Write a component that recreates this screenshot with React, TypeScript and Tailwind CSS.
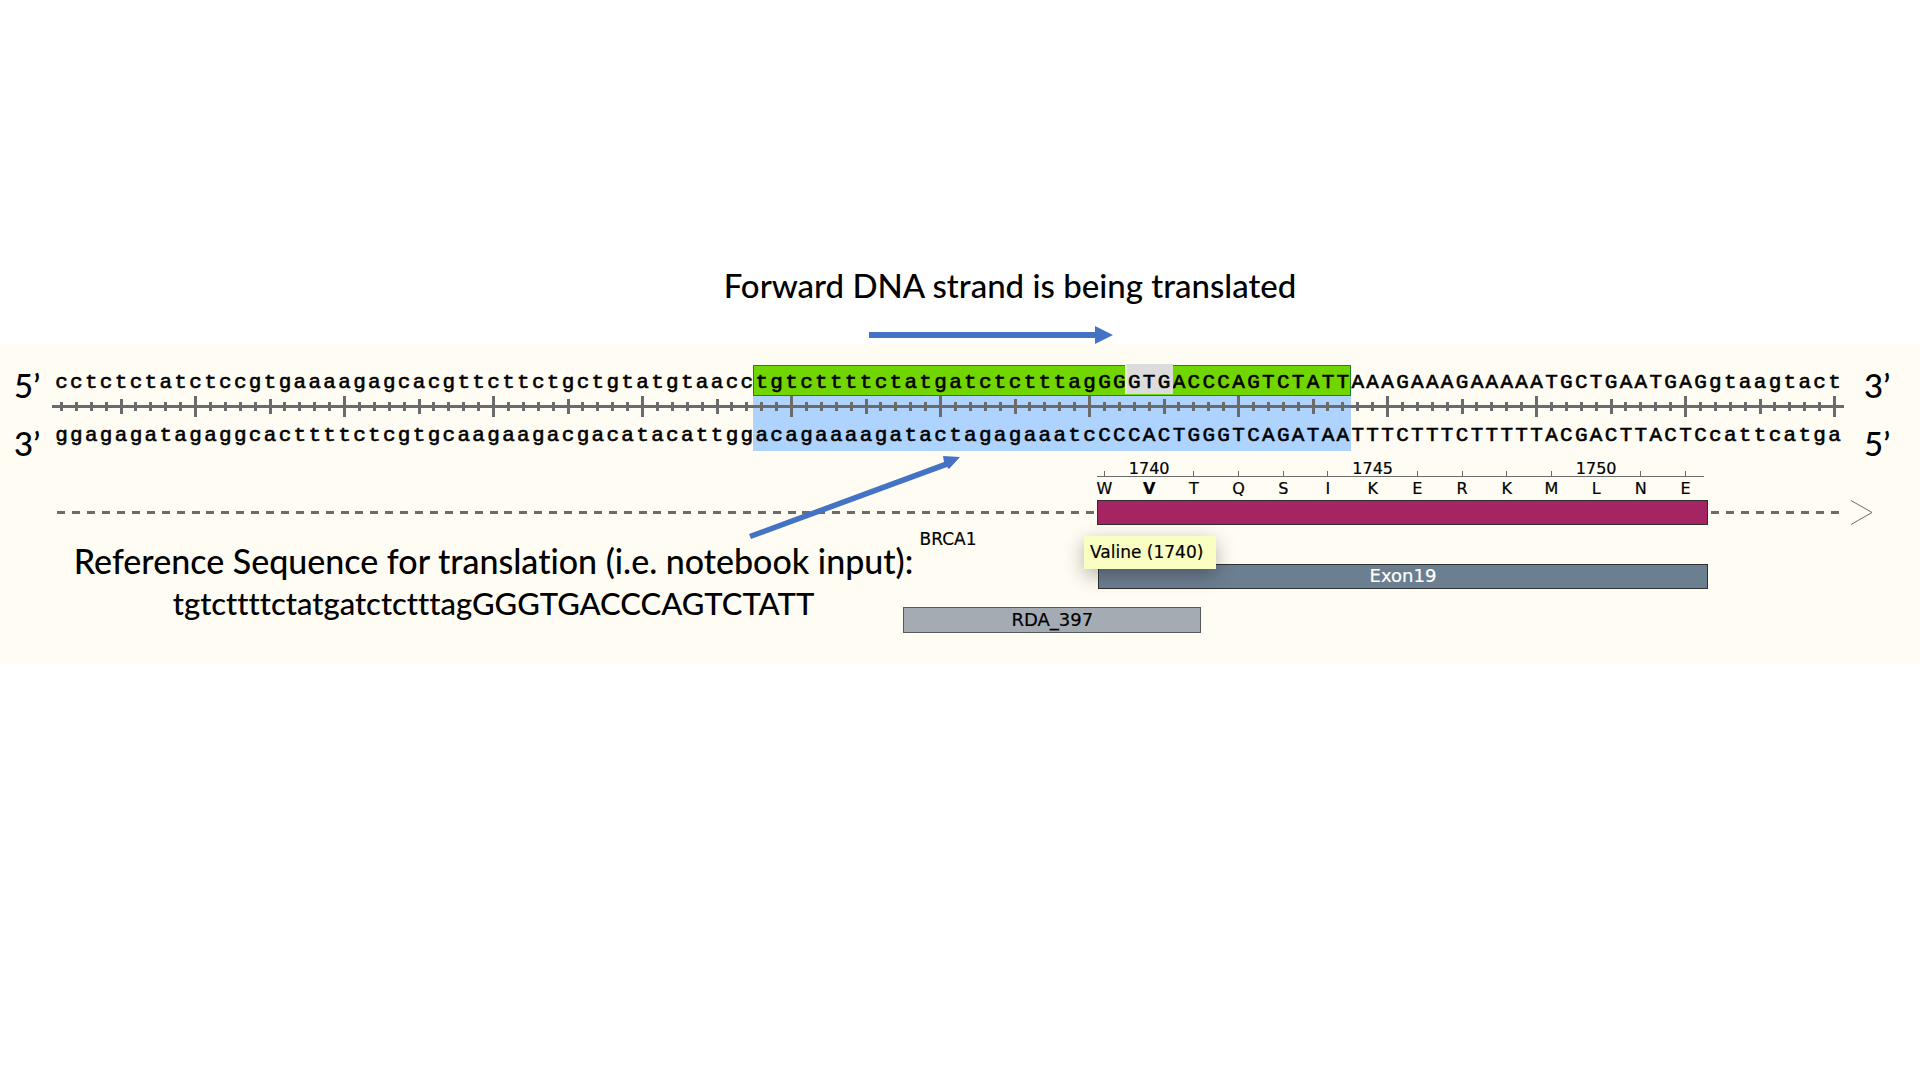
import type { ReactNode } from "react";

const FORWARD_LEAD = "cctctctatctccgtgaaaagagcacgttcttctgctgtatgtaacc";
const FORWARD_TAIL = "AAAGAAAGAAAAATGCTGAATGAGgtaagtact";
const REVERSE_LEAD = "ggagagatagaggcacttttctcgtgcaagaagacgacatacattgg";
const REVERSE_SELECTED = "acagaaaagatactagagaaatcCCCACTGGGTCAGATAA";
const REVERSE_TAIL = "TTTCTTTCTTTTTACGACTTACTCcattcatga";
const RESIDUES = "WVTQSIKERKMLNE";
const FIRST_RESIDUE = 1739;

function Bases({ children }: { children: string }) {
  return (
    <>
      {children.split("").map((base, i) => (
        <span key={i} className="flex justify-center pt-1.5">
          {base}
        </span>
      ))}
    </>
  );
}

function Track({ className, children }: { className: string; children: ReactNode }) {
  return <div className={`grid grid-cols-120 ${className}`}>{children}</div>;
}

function Scale() {
  return (
    <div className="relative">
      <Track className="h-[21px]">
        <div className="col-start-48 col-span-40 row-start-1 -ml-px -mr-px bg-[#aed3ff]" />
        <div className="col-span-full col-start-1 row-start-1 grid grid-cols-120 items-center justify-items-center">
          {Array.from({ length: 120 }, (_, i) => (
            <span
              key={i}
              className={`w-[3px] bg-[#6b6b6b] ${i % 10 === 9 ? "h-[21px]" : i % 5 === 4 ? "h-[15px]" : "h-[9px]"}`}
            />
          ))}
        </div>
      </Track>
      <div className="absolute -left-0.5 -right-0.5 top-[9px] h-[3px] bg-[#6b6b6b]" />
    </div>
  );
}

function Dashes({ count }: { count: number }) {
  return (
    <>
      {Array.from({ length: count }, (_, i) => (
        <span key={i} className="h-[3px] w-2 self-center justify-self-center bg-[#6b6b6b]" />
      ))}
    </>
  );
}

function StrandEnds({ top, bottom }: { top: string; bottom: string }) {
  return (
    <div className="flex flex-col gap-[18px] text-[33px] leading-10 font-medium">
      <span>{top}</span>
      <span>{bottom}</span>
    </div>
  );
}

export default function App() {
  return (
    <main className="min-h-screen overflow-hidden bg-white font-['Lato',sans-serif] text-black [font-variant-ligatures:none]">
      <header className="relative z-10 flex flex-col items-center pt-[263px]">
        <h1 className="ml-[100px] text-[33px] leading-[44px] font-medium">Forward DNA strand is being translated</h1>
        <svg className="-mb-px ml-[62px] mt-[19px] h-[18px] w-[244px]" viewBox="0 0 244 18" fill="#4472c4" aria-hidden="true">
          <path d="M0 6H226V0L244 9L226 18V12H0Z" />
        </svg>
      </header>

      <section className="mt-px flex bg-[#fffcf3] pt-[21px] pb-[31px]">
        <div className="w-[54px] shrink-0 pl-[14px]">
          <StrandEnds top="5’" bottom="3’" />
        </div>

        <div className="relative min-w-0 flex-1 font-['DejaVu_Sans',sans-serif] text-base">
          <Track className="h-[31px] font-['Liberation_Mono',monospace] text-[21px] leading-6 [-webkit-text-stroke:0.6px_black]">
            <Bases>{FORWARD_LEAD}</Bases>
            <div className="col-span-40 -ml-px -mr-px grid grid-cols-40 bg-[#71d500] px-px ring-1 ring-[#1c8420] ring-inset">
              <Bases>tgtcttttctatgatctctttagGG</Bases>
              <div className="relative col-span-3 grid grid-cols-3">
                <div className="absolute -left-0.5 -right-0.5 -top-px bottom-0.5 border-l-2 border-[#e8f3dc] bg-[#dcdcdc]" />
                <div className="relative col-span-3 grid grid-cols-3">
                  <Bases>GTG</Bases>
                </div>
              </div>
              <Bases>ACCCAGTCTATT</Bases>
            </div>
            <Bases>{FORWARD_TAIL}</Bases>
          </Track>
          <Scale />
          <Track className="h-[34px] font-['Liberation_Mono',monospace] text-[21px] leading-[26px] [-webkit-text-stroke:0.6px_black]">
            <Bases>{REVERSE_LEAD}</Bases>
            <div className="col-span-40 -ml-px -mr-px grid grid-cols-40 bg-[#aed3ff] px-px">
              <Bases>{REVERSE_SELECTED}</Bases>
            </div>
            <Bases>{REVERSE_TAIL}</Bases>
          </Track>

          <Track className="mt-2 h-[18px]">
            <div className="col-span-41 col-start-71 row-start-1 mr-1 border-b border-[#6b6b6b]" />
            <div className="col-span-42 col-start-70 row-start-1 grid grid-cols-14 justify-items-center [-webkit-text-stroke:0.2px_black]">
              {RESIDUES.split("").map((_, i) =>
                (FIRST_RESIDUE + i) % 5 === 0 ? (
                  <span key={i} className="h-[18px] leading-5">
                    {FIRST_RESIDUE + i}
                  </span>
                ) : (
                  <span key={i} className="h-[6px] w-px self-end bg-[#6b6b6b]" />
                ),
              )}
            </div>
          </Track>
          <Track className="h-[23px]">
            <div className="col-span-42 col-start-70 grid grid-cols-14 justify-items-center leading-[23px] [-webkit-text-stroke:0.2px_black]">
              {RESIDUES.split("").map((residue, i) => (
                <span key={i} className={i === 1 ? "font-bold" : ""}>
                  {residue}
                </span>
              ))}
            </div>
          </Track>
          <Track className="h-[25px]">
            <Dashes count={70} />
            <div className="col-span-41 border border-[#2f2f2f] bg-[#a52563]" />
            <Dashes count={9} />
          </Track>

          <Track className="grid-rows-[39px_43px_26px]">
            <span className="col-span-full col-start-1 row-start-1 self-start pt-0.5 text-center text-[17px] leading-6 [-webkit-text-stroke:0.2px_black]">
              BRCA1
            </span>
            <p className="col-span-59 col-start-1 row-span-3 row-start-1 flex flex-col items-center pt-3.5 font-['Lato',sans-serif] leading-[43px] font-medium whitespace-nowrap">
              <span className="text-[34px]">Reference Sequence for translation (i.e. notebook input):</span>
              <span className="text-[31px]">tgtcttttctatgatctctttagGGGTGACCCAGTCTATT</span>
            </p>
            <div className="relative col-span-41 col-start-71 row-start-2 ml-px h-[25px] border border-[#2f2f2f] bg-[#6c7f91] text-center text-[18px] leading-[22px] text-white [-webkit-text-stroke:0.2px]">
              Exon19
              <div
                role="tooltip"
                className="absolute -left-[15px] -top-[29px] h-[33px] w-[132px] bg-[#fbfec3] pl-[6px] text-left text-[17px] leading-[33px] text-black shadow-[0_6px_20px_rgba(0,0,0,0.3)]"
              >
                Valine (1740)
              </div>
            </div>
            <div className="col-span-20 col-start-58 row-start-3 h-[26px] border border-[#555b5b] bg-[#a5abb3] text-center text-[18px] leading-6 [-webkit-text-stroke:0.2px_black]">
              RDA_397
            </div>
          </Track>

          <svg
            className="absolute left-[38.8%] top-[90px] h-[84px] w-[214px]"
            viewBox="0 0 214 84"
            fill="#4472c4"
            aria-hidden="true"
          >
            <path d="M1 79L196 7L195 1L212 2L201 14L199 12L3 84Z" />
          </svg>
        </div>

        <div className="w-[78px] shrink-0 pl-[9px]">
          <div className="pl-[13px]">
            <StrandEnds top="3’" bottom="5’" />
          </div>
          <svg className="mt-[37px] h-[25px] w-[22px]" viewBox="0 0 22 25" fill="none" stroke="#6b6b6b" aria-hidden="true">
            <path d="M0 0.5L21 12.5L0 24.5" />
          </svg>
        </div>
      </section>
    </main>
  );
}
